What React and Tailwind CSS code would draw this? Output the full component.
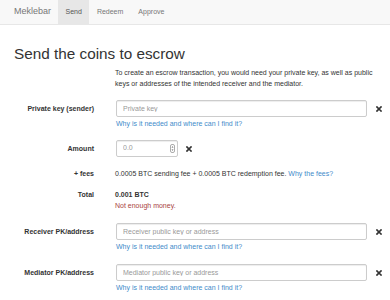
import React from 'react';

const font = { fontFamily: '"Liberation Sans", Arial, sans-serif' };

function RemoveIcon() {
  return (
    <svg width="6" height="6" viewBox="0 0 6 6" className="shrink-0">
      <path d="M1 1 L5 5 M5 1 L1 5" stroke="#333" strokeWidth="1.7" strokeLinecap="square" />
    </svg>
  );
}

function HelpLink({ children = 'Why is it needed and where can I find it?' }) {
  return <a href="#" className="block text-[7px] leading-[10px] text-[#428bca] mt-[2px]">{children}</a>;
}

function TextRow({ label, placeholder, className = '' }) {
  return (
    <div className={'flex items-start ' + className}>
      <label className="w-[94px] shrink-0 text-right font-bold text-[7px] leading-[17px] text-[#333]">{label}</label>
      <div className="ml-[22px] w-[251px] shrink-0">
        <input
          placeholder={placeholder}
          className="block w-full h-[17px] px-[6px] text-[7px] border border-[#ccc] rounded-[2px] bg-white outline-none placeholder:text-[#999] shadow-[inset_0_1px_1px_rgba(0,0,0,0.075)]"
        />
        <HelpLink />
      </div>
      <div className="h-[17px] flex items-center ml-[9px]">
        <RemoveIcon />
      </div>
    </div>
  );
}

export default function App() {
  return (
    <div className="w-[390px] h-[300px] overflow-hidden bg-white text-[#333]" style={font}>
      <nav className="h-[25px] bg-[#f8f8f8] border-b border-[#e7e7e7] flex items-stretch pl-[14px]">
        <a href="#" className="flex items-center text-[9px] text-[#777] pr-[7px]">Meklebar</a>
        <div className="flex items-stretch text-[7px]">
          <a href="#" className="flex items-center px-[7.5px] bg-[#e7e7e7] text-[#555]">Send</a>
          <a href="#" className="flex items-center px-[7.5px] text-[#777]">Redeem</a>
          <a href="#" className="flex items-center px-[7.5px] text-[#777]">Approve</a>
        </div>
      </nav>

      <div className="px-[14px]">
        <h1 className="mt-[21px] text-[15.3px] leading-[16px] text-[#333]">Send the coins to escrow</h1>
      </div>

      <p className="ml-[115px] mt-[5px] w-[265px] text-[7px] leading-[11px] text-[#333]">
        To create an escrow transaction, you would need your private key, as well as public keys or addresses of the intended receiver and the mediator.
      </p>

      <TextRow className="mt-[11px]" label="Private key (sender)" placeholder="Private key" />

      <div className="flex items-start mt-[11px]">
        <label className="w-[94px] shrink-0 text-right font-bold text-[7px] leading-[17px]">Amount</label>
        <div className="ml-[22px] w-[62px] h-[17px] shrink-0 flex items-center border border-[#ccc] rounded-[2px] bg-white pl-[6px] pr-[2px] shadow-[inset_0_1px_1px_rgba(0,0,0,0.075)]">
          <input placeholder="0.0" className="flex-1 min-w-0 text-[7px] outline-none placeholder:text-[#999] bg-transparent" />
          <svg width="5" height="9" viewBox="0 0 5 9" className="shrink-0">
            <rect x="0.5" y="0.5" width="4" height="8" rx="1.5" fill="#fff" stroke="#888" strokeWidth="0.7" />
            <path d="M1.5 3.4 L2.5 2.2 L3.5 3.4 Z M1.5 5.6 L2.5 6.8 L3.5 5.6 Z" fill="#555" />
          </svg>
        </div>
        <div className="h-[17px] flex items-center ml-[8px]">
          <RemoveIcon />
        </div>
      </div>

      <div className="flex items-start mt-[12px]">
        <div className="w-[94px] shrink-0 text-right font-bold text-[7px] leading-[10px]">+ fees</div>
        <div className="ml-[21px] text-[7px] leading-[10px]">
          0.0005 BTC sending fee + 0.0005 BTC redemption fee. <a href="#" className="text-[#428bca]">Why the fees?</a>
        </div>
      </div>

      <div className="flex items-start mt-[10px]">
        <div className="w-[94px] shrink-0 text-right font-bold text-[7px] leading-[11px]">Total</div>
        <div className="ml-[21px] text-[7px] leading-[11px]">
          <div className="font-bold">0.001 BTC</div>
          <div className="text-[#a94442]">Not enough money.</div>
        </div>
      </div>

      <TextRow className="mt-[12px]" label="Receiver PK/address" placeholder="Receiver public key or address" />
      <TextRow className="mt-[12px]" label="Mediator PK/address" placeholder="Mediator public key or address" />
    </div>
  );
}
